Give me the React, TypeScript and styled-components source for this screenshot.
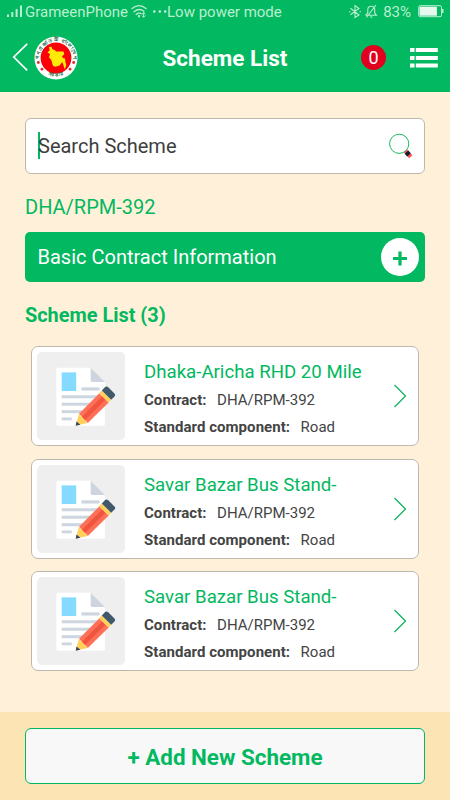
import React, { FC } from "react";
import styled, { createGlobalStyle } from "styled-components";

const green = "#02b860";

const GlobalStyle = createGlobalStyle`
  * {
    box-sizing: border-box;
  }

  body {
    margin: 0;
    background: #fff1d9;
    font-family: Roboto, sans-serif;
  }

  svg {
    display: block;
    flex: none;
    overflow: visible;
  }
`;

const Screen = styled.div`
  width: 450px;
  height: 800px;
  display: flex;
  flex-direction: column;
  overflow: hidden;
`;

const Header = styled.header`
  height: 92px;
  flex: none;
  background: ${green};
`;

const StatusBar = styled.div`
  height: 24px;
  display: flex;
  align-items: center;
  padding: 0 6px;
  color: #b9efd0;
  font-size: 15px;
  white-space: pre;
`;

const StatusText = styled.span<{ gapAfter?: number }>`
  line-height: 22px;
  margin-right: ${(p): number => p.gapAfter ?? 0}px;
`;

const Spacer = styled.div`
  flex: 1;
`;

const NavBar = styled.div`
  height: 68px;
  display: grid;
  grid-template-columns: 22px 128.5px 1fr 25px 28px;
  align-items: center;
  padding: 0 12px;
`;

const Title = styled.h1`
  margin: 0;
  color: #fff;
  font-size: 22.5px;
  font-weight: 700;
  line-height: 28px;
  white-space: nowrap;
`;

const Badge = styled.div`
  width: 25px;
  height: 25px;
  margin: -1px 0 0 -24px;
  border-radius: 50%;
  background: #e2001f;
  color: #fff;
  font-size: 18px;
  line-height: 26px;
  text-align: center;
`;

const Content = styled.main`
  flex: 1;
  padding: 26px 25px 0;
`;

const SearchBox = styled.div`
  height: 56px;
  display: flex;
  align-items: center;
  padding: 0 11px 0 12px;
  border: 1px solid #bdb8ae;
  border-radius: 6px;
  background: #fff;
`;

const Caret = styled.div`
  width: 2px;
  height: 27px;
  margin-top: -2px;
  margin-right: -2px;
  background: ${green};
`;

const Placeholder = styled.span`
  flex: 1;
  color: #3e3e3e;
  font-size: 20px;
  line-height: 24px;
`;

const ContractCode = styled.div`
  margin-top: 21px;
  color: ${green};
  font-size: 20px;
  line-height: 24px;
`;

const InfoBar = styled.div`
  height: 50px;
  margin-top: 13px;
  display: flex;
  align-items: center;
  justify-content: space-between;
  padding: 0 6px 0 12.5px;
  border-radius: 5px;
  background: ${green};
  color: #fff;
  font-size: 20px;
`;

const RoundButton = styled.div`
  width: 38px;
  height: 38px;
  display: flex;
  align-items: center;
  justify-content: center;
  border-radius: 50%;
  background: #fff;
`;

const SectionTitle = styled.h2`
  margin: 22px 0 0;
  color: ${green};
  font-size: 19.9px;
  font-weight: 700;
  line-height: 24px;
`;

const CardList = styled.div`
  display: flex;
  flex-direction: column;
  gap: 12.5px;
  padding: 18.4px 6px 0;
`;

const Card = styled.div`
  height: 100px;
  display: flex;
  align-items: center;
  padding: 0 11px 0 5px;
  border: 1px solid #bdb8ae;
  border-radius: 7px;
  background: #fff;
`;

const Thumb = styled.div`
  width: 88px;
  height: 88px;
  flex: none;
  border-radius: 5px;
  background: #efefef;
`;

const CardText = styled.div`
  flex: 1;
  padding: 8px 0 0 19px;
  white-space: nowrap;
`;

const CardTitle = styled.div`
  color: ${green};
  font-size: 18.65px;
  line-height: 27px;
  margin-bottom: 1px;
`;

const Detail = styled.div`
  display: flex;
  gap: 10.5px;
  color: #444;
  font-size: 15px;
  line-height: 27px;

  b {
    font-weight: 700;
    letter-spacing: 0.05px;
  }
`;

const Footer = styled.footer`
  height: 88px;
  flex: none;
  padding: 16px 25px 0;
  background: #fde4b4;
`;

const AddButton = styled.div`
  height: 56px;
  border: 1px solid ${green};
  border-radius: 6px;
  background: #f8f8f8;
  color: ${green};
  font-size: 22.4px;
  font-weight: 700;
  line-height: 57px;
  text-align: center;
`;

const SignalIcon: FC = () => (
  <svg width="19" height="24" fill="#b9efd0">
    <rect x="1" y="14.5" width="2" height="2.5" />
    <rect x="5.3" y="12" width="2" height="5" />
    <rect x="9.6" y="9" width="2" height="8" />
    <rect x="14" y="5.5" width="2" height="11.5" />
  </svg>
);

const WifiIcon: FC = () => (
  <svg
    width="22"
    height="24"
    viewBox="-1 0 22 24"
    fill="none"
    stroke="#b9efd0"
    strokeWidth="1.4"
    strokeLinecap="round"
  >
    <path d="M3 8.5Q10 2.7 17 8.5M5 11.7Q10 7.7 15 11.2M7.2 14.4Q10 12.4 12 13.6" />
    <circle cx="10" cy="16.2" r=".5" />
    <path d="M14.6 12.6V17M13.2 14L14.6 12.6L16 14M13.2 15.8L14.6 17.2L16 15.8" strokeWidth="1" />
  </svg>
);

const DotsIcon: FC = () => (
  <svg width="17" height="24" fill="#d3f5e2">
    <circle cx="4.3" cy="11.5" r="1.2" />
    <circle cx="9.8" cy="11.5" r="1.2" />
    <circle cx="15.2" cy="11.5" r="1.2" />
  </svg>
);

const BluetoothIcon: FC = () => (
  <svg width="16" height="24" fill="none" stroke="#b9efd0" strokeWidth="1.1">
    <path d="M2.5 8.3L11 15L7 17.5V5.5L11 8.5L2.5 14.7M1 11.7H2.5M11.5 11.7H13" />
  </svg>
);

const MuteIcon: FC = () => (
  <svg width="19" height="24" fill="none" stroke="#b9efd0" strokeWidth="1.1">
    <path d="M1.5 15.3H12.5L10.7 13V9.5Q10.5 6.3 7.2 6.3Q3.9 6.3 3.8 9.5V13L1.5 15.3M6 17H8.5M12 5L2.5 17.5" />
  </svg>
);

const BatteryIcon: FC = () => (
  <svg width="26" height="24">
    <rect x=".7" y="5.7" width="22.8" height="11" rx="1.5" fill="none" stroke="#b9efd0" />
    <rect x="1.5" y="6.7" width="17.4" height="9" fill="#e6f9ef" />
    <rect x="24" y="9" width="1.5" height="4" fill="#b9efd0" />
  </svg>
);

const BackIcon: FC = () => (
  <svg width="22" height="44" fill="none" stroke="#fff" strokeWidth="1.7">
    <path d="M15.2 7.8L1.8 21L15.2 34.3" />
  </svg>
);

const Emblem: FC = () => (
  <svg width="44" height="44" viewBox="0 0 44 44">
    <defs>
      <path id="arcTop" d="M5.8 25A16.5 16.5 0 1 1 38.2 25" />
      <path id="arcBottom" d="M9.5 35.6A18.5 18.5 0 0 0 34.5 35.6" />
    </defs>
    <circle cx="22" cy="22" r="21.5" fill="#fff" />
    <circle cx="22" cy="22" r="15.4" fill="#fb0007" />
    <path
      fill="#ffe909"
      d="M15 11L17.5 10.7L18.2 13L21 14.2L22 15.5H29.5L30.3 18L28 20.5L29 22L31 22.5L31.5 26.5L32.3 29L30.8 33.5L29.5 29.5L28.3 26L25.5 29.5L21.5 30.8L19 30L17.3 24L15 21.5L16 18L13.5 16.5L15.7 14.2Z"
    />
    <g fill="#e5243a">
      <circle cx="4.3" cy="26.5" r="1.4" />
      <circle cx="39.7" cy="26.5" r="1.4" />
      <circle cx="8" cy="33.2" r="1.4" />
      <circle cx="36" cy="33.2" r="1.4" />
    </g>
    <g fill="#075c35" fontSize="5" fontWeight="700">
      <text>
        <textPath href="#arcTop" textLength="54" startOffset="2">
          গণপ্রজাতন্ত্রী বাংলাদেশ
        </textPath>
      </text>
      <text>
        <textPath href="#arcBottom" textLength="17" startOffset="5">
          সরকার
        </textPath>
      </text>
    </g>
  </svg>
);

const MenuIcon: FC = () => (
  <svg width="28" height="22" fill="#fff">
    {[1, 9, 16.5].map((y) => (
      <g key={y}>
        <rect x="0" y={y} width="4.5" height="4" />
        <rect x="5.8" y={y} width="22" height="4" />
      </g>
    ))}
  </svg>
);

const SearchIcon: FC = () => (
  <svg width="24" height="26" fill="none">
    <circle cx="10.2" cy="10.8" r="9.6" stroke="#18b967" strokeWidth="1" />
    <path d="M16.5 18L21.8 23.7" stroke="#fa5554" strokeWidth="4.6" />
    <path d="M17.5 19.1L20 21.8" stroke="#0c2038" strokeWidth="4.8" />
  </svg>
);

const PlusIcon: FC = () => (
  <svg width="14" height="18" stroke={green} strokeWidth="3.2">
    <path d="M0 10.5H14M7 3.5V17.5" />
  </svg>
);

const ArrowIcon: FC = () => (
  <svg width="14" height="24" fill="none" stroke="#12b45f" strokeWidth="1.3">
    <path d="M1.5 1L12.5 12L1.5 23" />
  </svg>
);

const DocumentIcon: FC = () => (
  <svg width="88" height="88" viewBox="0 0 88 88">
    <path
      fill="#fff"
      d="M21 15.7H53.7L68 30V72Q68 73.7 66.3 73.7H21Q19.3 73.7 19.3 72V17.4Q19.3 15.7 21 15.7Z"
    />
    <path fill="#cdd5df" d="M53.7 15.7L68 30H55.2Q53.7 30 53.7 28.3Z" />
    <rect x="24.7" y="20.4" width="14.5" height="18.6" fill="#84dbff" />
    <g fill="#cdd5df">
      <rect x="44.5" y="35.4" width="18" height="3.1" />
      <rect x="24.7" y="43.3" width="38" height="3" />
      <rect x="24.7" y="50.7" width="30" height="3" />
      <rect x="24.7" y="58.2" width="24" height="3" />
      <rect x="24.7" y="65.5" width="10" height="2.8" />
    </g>
    <path fill="#ff7058" d="M62.4 41.3L71.7 50.5L50.8 71L42 61.8Z" />
    <path fill="#f1543f" d="M65.4 44.3L68.6 47.5L47.6 68.4L44.5 65.2Z" />
    <path fill="#ffd15c" d="M64.8 38.5L74.2 47.8L71.4 50.6L62 41.3ZM42 61.8L50.8 71L38.7 73.6Z" />
    <path
      fill="#40596b"
      d="M64.8 38.5L68.1 35.1Q69.5 33.8 71 35.1L77.5 41.6Q79 43 77.5 44.5L74.2 47.8Z"
    />
    <path fill="#334a5e" d="M39.5 69.5L43.4 72.7L38.7 73.7Z" />
  </svg>
);

interface Scheme {
  id: number;
  name: string;
  contract: string;
  component: string;
}

const schemes: Scheme[] = [
  {
    id: 1,
    name: "Dhaka-Aricha RHD 20 Mile",
    contract: "DHA/RPM-392",
    component: "Road",
  },
  {
    id: 2,
    name: "Savar Bazar Bus Stand-",
    contract: "DHA/RPM-392",
    component: "Road",
  },
  {
    id: 3,
    name: "Savar Bazar Bus Stand-",
    contract: "DHA/RPM-392",
    component: "Road",
  },
];

const SchemeCard: FC<{ scheme: Scheme }> = ({ scheme }) => (
  <Card>
    <Thumb>
      <DocumentIcon />
    </Thumb>
    <CardText>
      <CardTitle>{scheme.name}</CardTitle>
      <Detail>
        <b>Contract:</b>
        <span>{scheme.contract}</span>
      </Detail>
      <Detail>
        <b>Standard component:</b>
        <span>{scheme.component}</span>
      </Detail>
    </CardText>
    <ArrowIcon />
  </Card>
);

const App: FC = () => (
  <Screen>
    <GlobalStyle />
    <Header>
      <StatusBar>
        <SignalIcon />
        <StatusText>GrameenPhone</StatusText>
        <WifiIcon />
        <DotsIcon />
        <StatusText>Low power mode</StatusText>
        <Spacer />
        <BluetoothIcon />
        <MuteIcon />
        <StatusText gapAfter={7}>83%</StatusText>
        <BatteryIcon />
      </StatusBar>
      <NavBar>
        <BackIcon />
        <Emblem />
        <Title>Scheme List</Title>
        <Badge>0</Badge>
        <MenuIcon />
      </NavBar>
    </Header>
    <Content>
      <SearchBox>
        <Caret />
        <Placeholder>Search Scheme</Placeholder>
        <SearchIcon />
      </SearchBox>
      <ContractCode>DHA/RPM-392</ContractCode>
      <InfoBar>
        Basic Contract Information
        <RoundButton>
          <PlusIcon />
        </RoundButton>
      </InfoBar>
      <SectionTitle>Scheme List (3)</SectionTitle>
      <CardList>
        {schemes.map((scheme) => (
          <SchemeCard key={scheme.id} scheme={scheme} />
        ))}
      </CardList>
    </Content>
    <Footer>
      <AddButton>+ Add New Scheme</AddButton>
    </Footer>
  </Screen>
);

export default App;
